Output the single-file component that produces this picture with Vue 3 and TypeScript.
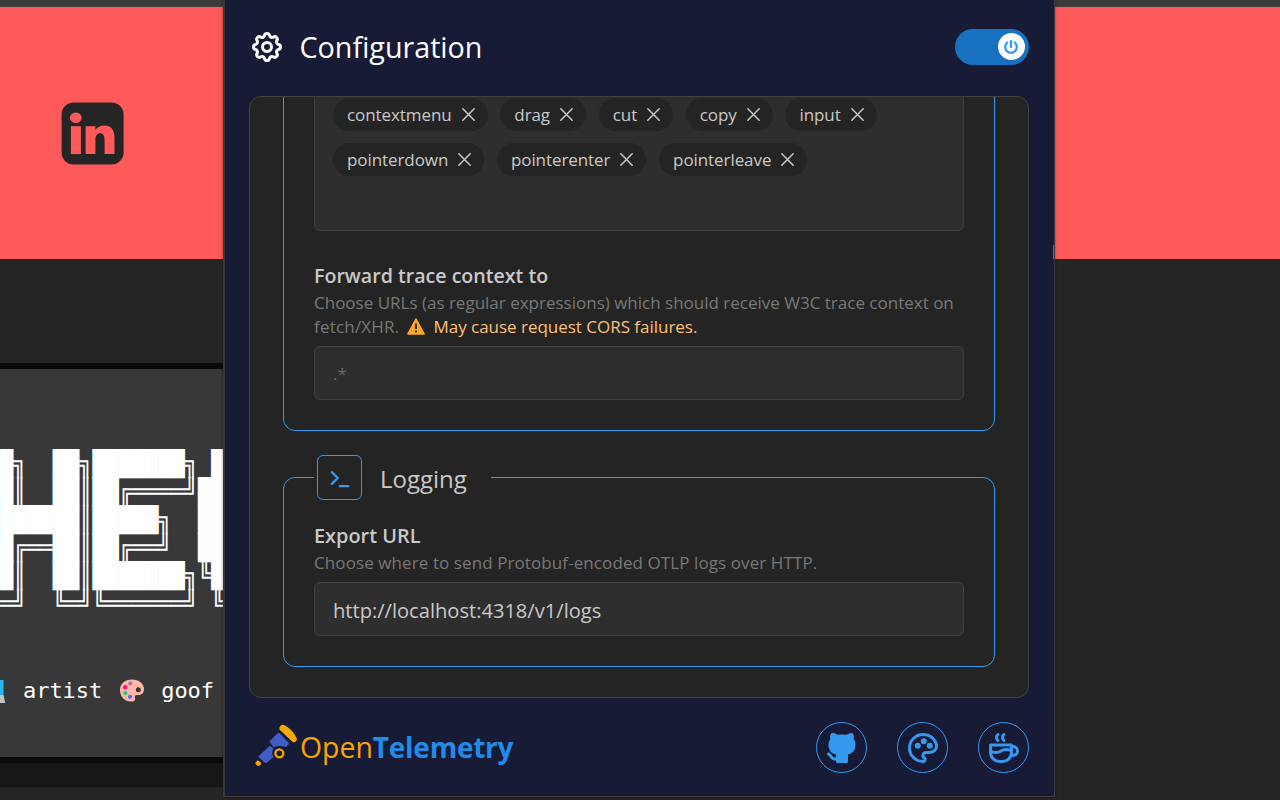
<script setup lang="ts">
const eventRows: string[][] = [
  ['contextmenu', 'drag', 'cut', 'copy', 'input'],
  ['pointerdown', 'pointerenter', 'pointerleave'],
]

const banner: string = [
  '█╗  ██╗███████╗ █',
  '█║  ██║██╔════╝██',
  '██████║█████╗  ██',
  '█╔══██║██╔══╝  ██',
  '█║  ██║███████╗╚█',
  '═╝  ╚═╝╚══════╝ ╚',
].join('\n')
</script>

<template>
  <div class="page">
    <div class="site">
      <div class="strip"></div>
      <div class="hero">
        <svg class="linkedin" viewBox="0 0 63 63">
          <g transform="translate(.6 .5)">
            <rect width="62" height="62" rx="12" fill="#252525" />
            <g fill="#ff5a5a">
              <ellipse cx="14.2" cy="15.3" rx="5.9" ry="5.3" />
              <path d="M9.3 23.700h10V51.600H9.300z" />
              <path d="M24 23.700h9.800v3.900c2-3 5-4.600 8.800-4.600 7 0 10.300 4.700 10.300 12V51.600H43V37.500c0-4-1.400-6.700-4.500-6.700s-4.700 2.700-4.700 6.700V51.600H24z" />
            </g>
          </g>
        </svg>
      </div>
      <div class="gap"></div>
      <div class="terminal">
        <pre class="banner">{{ banner }}</pre>
        <div class="roles">
          <svg class="laptop" viewBox="0 0 6 26">
            <path d="M0 2h3.500v15H0z" fill="#29b6f6" />
            <path d="M3.200 2h.8v15h-.8z" fill="#546e7a" />
            <path d="M0 17h3.600l1.600 8H0z" fill="#c4c4c8" />
          </svg>
          <span class="role">artist</span>
          <svg class="paint" viewBox="0 0 26 26">
            <path d="M13 1.500C5.500 1.500 1 6 1 12c0 7 5 11.500 11 11.500 4 0 4.500-1.500 4-3.500s0-3 2-3c4 .4 7-1.500 7-5.500 0-6-5-10-12-10z" fill="#ffb8a8" />
            <circle cx="19.300" cy="11.800" r="2.500" fill="#383838" />
            <circle cx="11.300" cy="5.500" r="2" fill="#9575cd" />
            <circle cx="6.200" cy="9.200" r="2.200" fill="#f5128c" />
            <circle cx="6.300" cy="15" r="2.100" fill="#14cf70" />
            <circle cx="11" cy="18.800" r="2.100" fill="#4a6cf7" />
          </svg>
          <span class="role">goof</span>
        </div>
      </div>
      <div class="below"></div>
    </div>

    <div class="popup">
      <header class="head">
        <svg class="icon gear" viewBox="0 0 24 24">
          <path d="M10.325 4.317c.426 -1.756 2.924 -1.756 3.35 0a1.724 1.724 0 0 0 2.573 1.066c1.543 -.94 3.31 .826 2.37 2.37a1.724 1.724 0 0 0 1.065 2.572c1.756 .426 1.756 2.924 0 3.35a1.724 1.724 0 0 0 -1.066 2.573c.94 1.543 -.826 3.31 -2.37 2.37a1.724 1.724 0 0 0 -2.572 1.065c-.426 1.756 -2.924 1.756 -3.35 0a1.724 1.724 0 0 0 -2.573 -1.066c-1.543 .94 -3.31 -.826 -2.37 -2.37a1.724 1.724 0 0 0 -1.065 -2.572c-1.756 -.426 -1.756 -2.924 0 -3.35a1.724 1.724 0 0 0 1.066 -2.573c-.94 -1.543 .826 -3.31 2.37 -2.37c1 .608 2.296 .07 2.572 -1.065z" />
          <circle cx="12" cy="12" r="3" />
        </svg>
        <h1 class="title">Configuration</h1>
        <div class="toggle">
          <span class="thumb">
            <svg class="icon power" viewBox="0 0 24 24">
              <path d="M7 6a7.75 7.75 0 1 0 10 0" />
              <path d="M12 4v8" />
            </svg>
          </span>
        </div>
      </header>

      <main class="panel">
        <section class="group first">
          <div class="tags">
            <div v-for="(row, i) in eventRows" :key="i" class="tag-row">
              <span v-for="name in row" :key="name" class="tag">
                <span>{{ name }}</span>
                <svg class="icon close" viewBox="0 0 13 13"><path d="M.8 .8l11.400 11.400M12.200 .8L.8 12.200" /></svg>
              </span>
            </div>
          </div>
          <div class="label forward">Forward trace context to</div>
          <div class="desc">
            <span>Choose URLs (as regular expressions) which should receive W3C trace context on</span><br />
            <span class="fetch">fetch/XHR.</span>
            <svg class="warn" viewBox="0 0 18 17">
              <path d="M9 1.200L17 16H1z" fill="#ffa726" stroke="#ffa726" stroke-width="1.600" stroke-linejoin="round" />
              <path d="M9 5.500v5.500M9 12.600v1.800" stroke="#33281a" stroke-width="2" />
            </svg>
            <span class="caution">May cause request CORS failures.</span>
          </div>
          <div class="field hint"><span>.*</span></div>
        </section>

        <fieldset class="group">
          <legend class="legend">
            <span class="badge">
              <svg class="icon shell" viewBox="0 0 24 24"><path d="M5 7l5 5l-5 5" /><path d="M12 19h7" /></svg>
            </span>
            <span class="name">Logging</span>
          </legend>
          <div class="label export">Export URL</div>
          <div class="desc wide">Choose where to send Protobuf-encoded OTLP logs over HTTP.</div>
          <div class="field"><span>http://localhost:4318/v1/logs</span></div>
        </fieldset>
      </main>

      <footer class="foot">
        <svg class="scope" viewBox="42 72 132 132">
          <path d="M119 89Q116 83 121 78Q127 72 134 76Q158 90 170 114Q173 119 168 124Q162 129 157 125Z" fill="#f5a800" />
          <path d="M90 127Q88 124 90 122L113 100Q116 97 119 100L146 128Q148 131 146 133L137 142Q129 138 122 138Q108 138 101 142Z" fill="#425cc7" />
          <path d="M57 167L86 140Q91 136 95 141L101 145Q92 160 101 171L82 187Q77 192 72 186L57 172Q54 169 57 167Z" fill="#425cc7" />
          <circle cx="118" cy="160" r="12" fill="none" stroke="#f5a800" stroke-width="7" />
          <path d="M47 187L54 181L64 189Q64 193 57 198Q53 199 51 196Q44 192 47 187Z" fill="#f5a800" />
        </svg>
        <div class="brand"><span class="open">Open</span><span class="tele">Telemetry</span></div>
        <div class="links">
          <span class="round">
            <svg viewBox="0 0 24 24" class="solid">
              <path d="M5.315 2.1c.791 -.113 1.9 .145 3.333 .966l.272 .161l.16 .1l.397 -.083a13.3 13.3 0 0 1 4.59 -.08l.456 .08l.396 .083l.161 -.1c1.385 -.84 2.487 -1.17 3.322 -1.148l.164 .008l.147 .017l.076 .014l.05 .011l.144 .047a1 1 0 0 1 .53 .514a5.2 5.2 0 0 1 .397 2.91l-.047 .267l-.046 .196l.123 .163c.574 .795 .93 1.728 1.03 2.707l.023 .295l.007 .272c0 3.855 -1.659 5.883 -4.644 6.68l-.245 .061l-.132 .029l.014 .161l.008 .157l.004 .365l-.002 .213l-.003 3.834a1 1 0 0 1 -.883 .993l-.117 .007h-6a1 1 0 0 1 -.993 -.883l-.007 -.117v-.734c-1.818 .26 -3.03 -.424 -4.11 -1.878l-.535 -.766c-.28 -.396 -.455 -.579 -.589 -.644l-.048 -.019a1 1 0 0 1 .564 -1.918c.642 .188 1.074 .568 1.57 1.239l.538 .769c.76 1.079 1.36 1.459 2.609 1.191l.001 -.678l-.018 -.168a5.03 5.03 0 0 1 -.021 -.824l.017 -.185l.019 -.12l-.108 -.024c-2.976 -.71 -4.703 -2.573 -4.875 -6.139l-.01 -.31l-.004 -.292a5.6 5.6 0 0 1 .908 -3.051l.152 -.222l.122 -.163l-.045 -.196a5.2 5.2 0 0 1 .145 -2.642l.1 -.282l.106 -.253a1 1 0 0 1 .529 -.514l.144 -.047l.154 -.03z" />
            </svg>
          </span>
          <span class="round">
            <svg class="icon" viewBox="0 0 24 24">
              <path d="M12 21a9 9 0 0 1 0 -18c4.97 0 9 3.582 9 8c0 1.06 -.474 2.078 -1.318 2.828c-.844 .75 -1.989 1.172 -3.182 1.172h-2.5a2 2 0 0 0 -1 3.75a1.3 1.3 0 0 1 -1 2.25" />
              <circle cx="8.5" cy="10.5" r="1" /><circle cx="12.5" cy="7.5" r="1" /><circle cx="16.5" cy="10.5" r="1" />
            </svg>
          </span>
          <span class="round">
            <svg class="icon" viewBox="0 0 24 24">
              <path d="M3 14c.83 .642 2.077 1.017 3.5 1c1.423 .017 2.67 -.358 3.5 -1c.83 -.642 2.077 -1.017 3.5 -1c1.423 -.017 2.67 .358 3.5 1" />
              <path d="M8 3a2.4 2.4 0 0 0 -1 2a2.4 2.4 0 0 0 1 2" />
              <path d="M12 3a2.4 2.4 0 0 0 -1 2a2.4 2.4 0 0 0 1 2" />
              <path d="M3 10h14v5a6 6 0 0 1 -6 6h-2a6 6 0 0 1 -6 -6v-5z" />
              <path d="M16.746 16.726a3 3 0 1 0 .252 -5.555" />
            </svg>
          </span>
        </div>
      </footer>
    </div>
  </div>
</template>

<style>
body { margin: 0; background: #252525; }
</style>

<style scoped>
.page {
  position: relative;
  width: 1280px;
  height: 800px;
  overflow: hidden;
  background: #252525;
  font-family: "Open Sans", "Noto Sans", sans-serif;
  color: #c9c9c9;
}
.page * { box-sizing: border-box; }
.site { display: flex; flex-direction: column; height: 800px; }
.strip { height: 7px; background: #3c3c3c; border-bottom: 1px solid #4a4040; }
.hero { height: 252px; background: #ff5a5a; padding: 95px 0 0 61px; }
.linkedin { display: block; width: 63px; height: 63px; }
.gap { height: 104px; }
.terminal {
  width: 1000px;
  height: 400px;
  background: #383838;
  border-top: 6px solid #0a0a0a;
  border-bottom: 6px solid #0a0a0a;
  padding-top: 80.500px;
  overflow: hidden;
}
.banner {
  margin: 0;
  width: 240px;
  height: 168px;
  color: #fff;
  font: 22px/25px "DejaVu Sans Mono", monospace;
  letter-spacing: -0.045px;
  transform: scaleY(1.12);
  transform-origin: 0 0;
}
.roles { display: flex; align-items: center; height: 30px; margin-top: 58px; color: #fff; }
.role { font: 22px/30px "DejaVu Sans Mono", monospace; letter-spacing: -0.045px; }
.laptop { width: 6px; height: 26px; margin-right: 17px; }
.paint { width: 26px; height: 26px; margin: 0 16px 0 17px; }
.below { width: 1000px; height: 24px; background: #171717; }

.popup {
  position: absolute;
  left: 223px;
  top: -2px;
  width: 832px;
  height: 799px;
  display: flex;
  flex-direction: column;
  padding: 0 25px 0 24px;
  background: #181b36;
  border: 1px solid #3c3c3c;
  border-left: 2px solid #383838;
  box-shadow: 0 0 3px rgba(0, 0, 0, 0.4);
}
.popup::after {
  content: "";
  position: absolute;
  right: 0;
  top: 246px;
  width: 1px;
  height: 14px;
  background: #a0505c;
}
.icon { display: block; fill: none; stroke: currentColor; stroke-width: 2; stroke-linecap: round; stroke-linejoin: round; }
.head { flex: none; display: flex; align-items: center; height: 97px; padding-bottom: 1px; color: #fff; }
.gear { width: 36px; height: 36px; }
.title { margin: 0 0 0 14.500px; font-size: 28.7px; font-weight: 400; line-height: 40px; }
.toggle { margin-left: auto; width: 74px; height: 36px; border-radius: 18px; background: #1971c2; padding: 4px 4px 0 42.500px; }
.thumb { display: flex; align-items: center; justify-content: center; width: 27px; height: 27px; border-radius: 50%; background: #fff; color: #339af0; }
.power { width: 18px; height: 18px; stroke-width: 3; }

.panel {
  flex: none;
  display: flex;
  flex-direction: column;
  justify-content: flex-end;
  gap: 24px;
  height: 602px;
  padding: 0 33px 30px;
  border: 1px solid #424242;
  border-radius: 12px;
  background: #242424;
  overflow: hidden;
}
.group { flex: none; margin: 0; min-width: 0; padding: 0 30px 30px; border: 1px solid #339af0; border-radius: 12px; }
.first { padding-top: 30px; }
.tags { display: flex; flex-direction: column; gap: 12px; padding: 45px 18px 54px; border: 1px solid #424242; border-radius: 6px; background: #2e2e2e; }
.tag-row { display: flex; gap: 12.7px; }
.tag { display: flex; align-items: center; height: 33px; padding: 0 13px 0 14px; border-radius: 17px; background: #242424; font-size: 17px; letter-spacing: -0.08px; }
.close { width: 13px; height: 13px; margin-left: 10px; stroke-width: 1.5; }
.label { font-size: 19.6px; font-weight: 600; line-height: 30px; white-space: nowrap; }
.forward { margin-top: 30px; }
.export { margin-top: 21px; font-size: 19.9px; }
.desc { font-size: 17px; line-height: 24px; color: #787878; white-space: nowrap; }
.wide { letter-spacing: 0.09px; }
.fetch { letter-spacing: 0.2px; }
.warn { width: 18px; height: 17px; margin: 0 8px; vertical-align: -2px; }
.caution { color: #ffc078; letter-spacing: -0.02px; }
.field { display: flex; align-items: center; height: 54px; margin-top: 7px; padding: 2px 18px 0; border: 1px solid #424242; border-radius: 6px; background: #2e2e2e; font-size: 20.1px; }
.hint { padding-top: 0; color: #696969; font-size: 17px; }
.legend { display: flex; align-items: center; height: 45px; padding: 0 24px 0 3px; }
.badge { display: flex; align-items: center; justify-content: center; width: 45px; height: 45px; border: 1px solid #339af0; border-radius: 6px; color: #339af0; }
.shell { width: 28px; height: 28px; }
.name { margin: 2px 0 0 18px; font-size: 24px; line-height: 32px; }

.foot { flex: none; display: flex; align-items: center; height: 99px; }
.scope { width: 44px; height: 44px; margin: 0 0 3px 5px; fill: none; }
.brand { margin: 0 0 2px 2px; font-size: 28px; line-height: 40px; }
.open { color: #f5a800; font-size: 28.4px; }
.tele { color: #228be6; font-weight: 700; letter-spacing: -0.25px; }
.links { display: flex; gap: 30px; margin-left: auto; }
.round { display: flex; align-items: center; justify-content: center; width: 51px; height: 51px; border: 1px solid #339af0; border-radius: 50%; color: #339af0; }
.round svg { width: 36px; height: 36px; }
.solid { fill: currentColor; }
</style>
